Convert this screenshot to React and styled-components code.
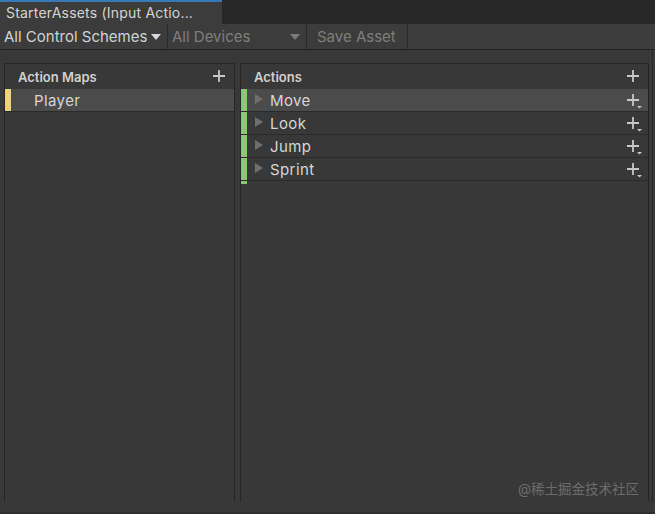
import React from "react";
import styled, { createGlobalStyle } from "styled-components";

const Global = createGlobalStyle`
  html, body { margin: 0; padding: 0; background: #383838; }
  body { font-family: Inter, "Noto Sans", sans-serif; }
  * { box-sizing: border-box; }
`;

const Window = styled.div`
  width: 655px;
  height: 514px;
  display: flex;
  flex-direction: column;
  background: #383838;
  overflow: hidden;
  position: relative;
`;

const TabBar = styled.div`
  height: 24px;
  background: #282828;
  display: flex;
`;

const Tab = styled.div`
  width: 222px;
  height: 24px;
  background: #3c3c3c;
  border-top: 2px solid #3a78b5;
  color: #d4d4d4;
  font-size: 14px;
  letter-spacing: 0.2px;
  line-height: 22px;
  padding-left: 6px;
  white-space: nowrap;
`;

const Toolbar = styled.div`
  height: 26px;
  background: #3c3c3c;
  border-bottom: 1px solid #222222;
  display: flex;
  align-items: stretch;
`;

const ToolItem = styled.div`
  width: ${(p) => p.$w}px;
  display: flex;
  align-items: center;
  justify-content: space-between;
  padding: 0 ${(p) => (p.$pr ?? 6)}px 0 ${(p) => p.$pl ?? 4}px;
  border-right: 1px solid #2a2a2a;
  color: ${(p) => (p.$dim ? "#7e7e7e" : "#d2d2d2")};
  font-size: 15px;
  white-space: nowrap;
`;

const Caret = styled.span`
  width: 0;
  height: 0;
  border-left: 5px solid transparent;
  border-right: 5px solid transparent;
  border-top: 6px solid ${(p) => (p.$dim ? "#7a7a7a" : "#d8d8d8")};
`;

const Body = styled.div`
  flex: 1;
  display: flex;
  gap: 5px;
  padding: 13px 6px 10px 4px;
  border-bottom: 2px solid #2f2f2f;
`;

const Panel = styled.div`
  width: ${(p) => p.$w}px;
  flex: ${(p) => (p.$w ? "none" : "1")};
  border: 1px solid #262626;
  border-bottom: none;
  display: flex;
  flex-direction: column;
`;

const Header = styled.div`
  height: 25px;
  display: flex;
  align-items: center;
  justify-content: space-between;
  padding: 0 5px 0 13px;
  color: #d0d0d0;
  font-weight: 600;
  font-size: 13px;
`;

const Row = styled.div`
  height: 23px;
  display: flex;
  align-items: center;
  background: ${(p) => (p.$selected ? "#4b4b4b" : "#383838")};
  border-bottom: 1px solid #2a2a2a;
  color: #d6d6d6;
  font-size: 15px;
  padding-right: 5px;
  padding-top: 1px;
`;

const ColorBar = styled.span`
  width: 6px;
  align-self: stretch;
  margin-top: -1px;
  background: ${(p) => p.$color};
  margin-right: ${(p) => p.$mr}px;
  flex: none;
`;

const Label = styled.span`
  flex: 1;
  letter-spacing: 0.4px;
`;

const Arrow = styled.span`
  width: 0;
  height: 0;
  border-top: 5px solid transparent;
  border-bottom: 5px solid transparent;
  border-left: 8px solid #6f6f6f;
  margin-right: 7px;
  margin-top: -3px;
`;

const Stub = styled.span`
  width: 6px;
  height: 3px;
  background: #8cc677;
`;

const Watermark = styled.div`
  position: absolute;
  right: 16px;
  bottom: 16px;
  color: #6c6c6c;
  font-size: 13.5px;
  font-family: Inter, "Noto Sans CJK SC", sans-serif;
`;

const ScrollEdge = styled.div`
  position: absolute;
  right: 2px;
  top: 50px;
  bottom: 12px;
  width: 1px;
  background: #2a2a2a;
`;

function PlusIcon({ drop }) {
  return (
    <svg width="17" height="16" viewBox="0 0 17 16">
      <path d="M7 1v12M1 7h12" stroke="#c8c8c8" strokeWidth="1.8" fill="none" />
      {drop && <path d="M11 13h5l-2.5 2.5z" fill="#c8c8c8" />}
    </svg>
  );
}

const actions = ["Move", "Look", "Jump", "Sprint"];

export default function App() {
  return (
    <Window>
      <Global />
      <TabBar>
        <Tab>StarterAssets (Input Actio...</Tab>
      </TabBar>
      <Toolbar>
        <ToolItem $w={168}>
          All Control Schemes <Caret />
        </ToolItem>
        <ToolItem $w={139} $dim $pr={6}>
          All Devices <Caret $dim />
        </ToolItem>
        <ToolItem $w={101} $dim $pl={10}>
          Save Asset
        </ToolItem>
      </Toolbar>
      <Body>
        <Panel $w={231}>
          <Header>
            Action Maps
            <PlusIcon />
          </Header>
          <Row $selected>
            <ColorBar $color="#ecd27a" $mr={23} />
            <Label>Player</Label>
          </Row>
        </Panel>
        <Panel>
          <Header>
            Actions
            <PlusIcon />
          </Header>
          {actions.map((a, i) => (
            <Row key={a} $selected={i === 0}>
              <ColorBar $color="#8cc677" $mr={8} />
              <Arrow />
              <Label>{a}</Label>
              <PlusIcon drop />
            </Row>
          ))}
          <Stub />
        </Panel>
      </Body>
      <ScrollEdge />
      <Watermark>@稀土掘金技术社区</Watermark>
    </Window>
  );
}
